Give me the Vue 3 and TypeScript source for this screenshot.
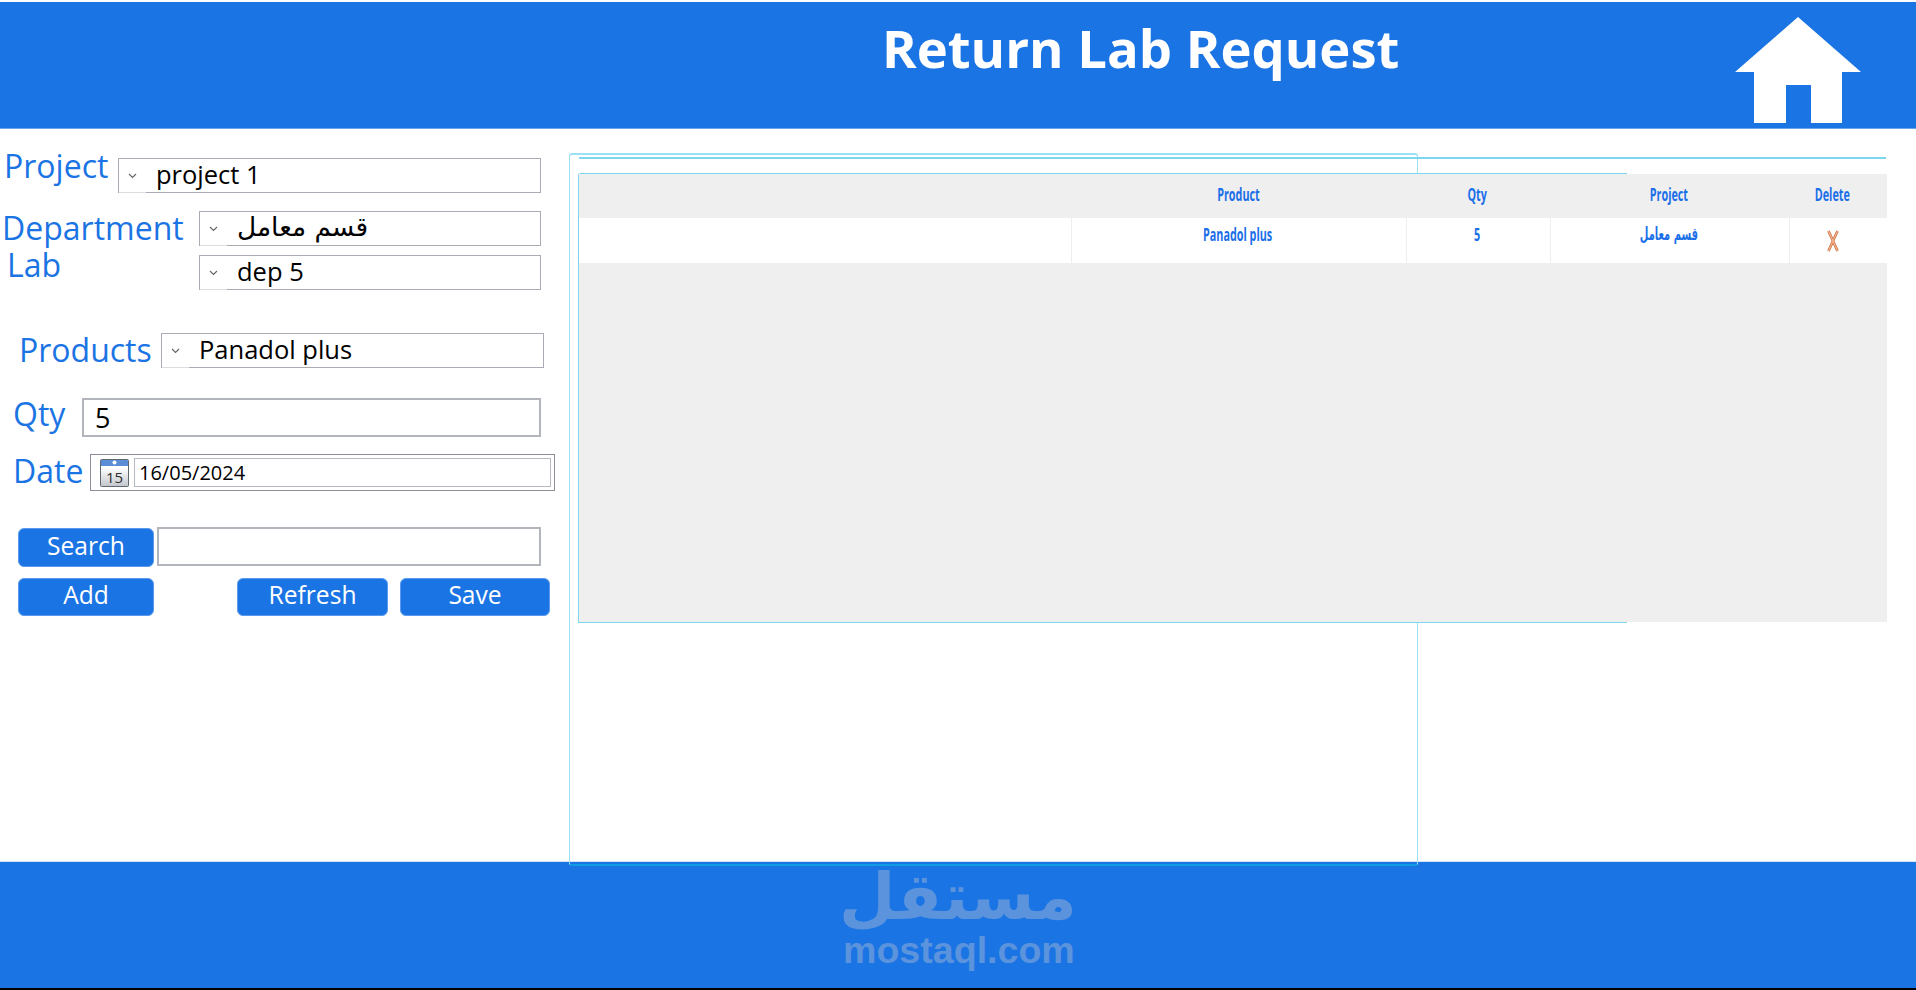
<script setup lang="ts">
// Return Lab Request screen
const columns = [
  { title: '', width: 493 },
  { title: 'Product', width: 335 },
  { title: 'Qty', width: 144 },
  { title: 'Project', width: 239 },
  { title: 'Delete', width: 97 }
]

const gridColumns = columns.map((c) => c.width + 'px').join(' ')
</script>

<template>
  <div class="page">
    <header class="header">
      <h1 class="title">Return Lab Request</h1>
      <svg class="home" width="126" height="106" viewBox="0 0 126 106">
        <path d="M63 0 L126 55 L107 55 L107 106 L76 106 L76 68 L51 68 L51 106 L19 106 L19 55 L0 55 Z" fill="#fff" />
      </svg>
    </header>

    <main class="main">
      <section class="form">
        <div class="row row-project">
          <label class="label label-project">Project</label>
          <div class="select select-project">
            <span class="chevron"><svg width="9" height="6" viewBox="0 0 9 6"><path d="M1 1 L4.5 4.5 L8 1" fill="none" stroke="#666" stroke-width="1.2" /></svg></span>
            <span class="select-text">project 1</span>
          </div>
        </div>

        <div class="row row-dept">
          <div class="label-stack">
            <label class="label">Department</label>
            <label class="label label-lab">Lab</label>
          </div>
          <div class="select-stack">
            <div class="select">
              <span class="chevron"><svg width="9" height="6" viewBox="0 0 9 6"><path d="M1 1 L4.5 4.5 L8 1" fill="none" stroke="#666" stroke-width="1.2" /></svg></span>
              <span class="select-text arabic">قسم معامل</span>
            </div>
            <div class="select">
              <span class="chevron"><svg width="9" height="6" viewBox="0 0 9 6"><path d="M1 1 L4.5 4.5 L8 1" fill="none" stroke="#666" stroke-width="1.2" /></svg></span>
              <span class="select-text">dep 5</span>
            </div>
          </div>
        </div>

        <div class="row row-products">
          <label class="label">Products</label>
          <div class="select select-products">
            <span class="chevron"><svg width="9" height="6" viewBox="0 0 9 6"><path d="M1 1 L4.5 4.5 L8 1" fill="none" stroke="#666" stroke-width="1.2" /></svg></span>
            <span class="select-text">Panadol plus</span>
          </div>
        </div>

        <div class="row row-qty">
          <label class="label label-qty">Qty</label>
          <input class="input input-qty" value="5" />
        </div>

        <div class="row row-date">
          <label class="label">Date</label>
          <div class="date-box">
            <svg class="calendar" width="29" height="28" viewBox="0 0 29 28">
              <defs>
                <linearGradient id="calBody" x1="0" y1="0" x2="0" y2="1">
                  <stop offset="0.3" stop-color="#ffffff" />
                  <stop offset="1" stop-color="#c2c6cc" />
                </linearGradient>
              </defs>
              <rect x="0.5" y="0.5" width="28" height="27" rx="1" fill="url(#calBody)" stroke="#5f6770" />
              <rect x="1" y="1" width="27" height="6" fill="#5c8ed6" />
              <circle cx="14.5" cy="3.5" r="2" fill="#fff" />
              <text x="14.5" y="24" text-anchor="middle" class="cal-day">15</text>
            </svg>
            <input class="date-input" value="16/05/2024" />
          </div>
        </div>

        <div class="row row-search">
          <button class="btn btn-left">Search</button>
          <input class="input input-search" />
        </div>

        <div class="row row-buttons">
          <button class="btn btn-left">Add</button>
          <button class="btn btn-refresh">Refresh</button>
          <button class="btn btn-save">Save</button>
        </div>
      </section>

      <section class="panel">
        <div class="panel-line"></div>
        <div class="inner">
          <div class="grid-view">
            <div class="grid-row head" :style="{ gridTemplateColumns: gridColumns }">
              <div v-for="col in columns" :key="col.title" class="cell">
                <span class="narrow">{{ col.title }}</span>
              </div>
            </div>
            <div class="grid-row body" :style="{ gridTemplateColumns: gridColumns }">
              <div class="cell"></div>
              <div class="cell"><span class="narrow">Panadol plus</span></div>
              <div class="cell"><span class="narrow">5</span></div>
              <div class="cell"><span class="narrow arabic-cell">قسم معامل</span></div>
              <div class="cell cell-delete">
                <svg width="12" height="22" viewBox="0 0 12 22">
                  <path d="M1.5 1 L10.5 21 M10.5 1 L1.5 21" fill="none" stroke="#c9683a" stroke-width="2.6" />
                  <path d="M1.5 1 L10.5 21 M10.5 1 L1.5 21" fill="none" stroke="#f5b592" stroke-width="1.2" />
                </svg>
              </div>
            </div>
          </div>
        </div>
      </section>
    </main>

    <footer class="footer">
      <div class="brand">
        <div class="brand-ar">مستقل</div>
        <div class="brand-en">mostaql.com</div>
      </div>
    </footer>
  </div>
</template>

<style>
html,
body {
  margin: 0;
  background: #fff;
  overflow: hidden;
}
</style>

<style scoped>
.page {
  width: 1916px;
  height: 990px;
  border-top: 2px solid #fff;
  box-sizing: border-box;
  display: flex;
  flex-direction: column;
  font-family: "Open Sans", "DejaVu Sans", sans-serif;
  background: #000;
}

.header {
  height: 127px;
  flex: none;
  box-sizing: border-box;
  background: #1b74e4;
  border-bottom: 1px solid #6aa4ec;
  display: flex;
  align-items: flex-start;
}

.title {
  margin: 11px 0 0 882px;
  color: #fff;
  font-size: 52.6px;
  line-height: 70px;
  font-weight: 700;
  white-space: nowrap;
}

.home {
  margin: 15px 55px 0 auto;
}

.main {
  height: 732px;
  flex: none;
  display: flex;
  align-items: flex-start;
  background: #fff;
}

.form {
  width: 569px;
  flex: none;
  padding-top: 29px;
  box-sizing: border-box;
}

.row {
  display: flex;
  align-items: flex-start;
}

.label {
  display: block;
  color: #1b74e4;
  font-size: 32px;
  line-height: 40px;
  white-space: nowrap;
}

.label-project {
  width: 118px;
  margin: -12px 0 0 4px;
  flex: none;
}

.row-project .select-project {
  width: 423px;
  flex: none;
  margin-left: -4px;
}

.select {
  height: 35px;
  box-sizing: border-box;
  border: 1px solid #a9acb4;
  background: #fff;
  display: flex;
  align-items: center;
  position: relative;
}

/* the dropdown button hides part of the bottom border */
.select::after {
  content: "";
  position: absolute;
  left: 0;
  bottom: -1px;
  width: 27px;
  height: 1px;
  background: #dcdde0;
}

.chevron {
  width: 27px;
  height: 100%;
  flex: none;
  display: flex;
  align-items: center;
  justify-content: center;
  margin-right: 10px;
}

.chevron svg {
  display: block;
}

.select-text {
  color: #000;
  font-size: 25.5px;
  line-height: 30px;
  padding-bottom: 3px;
}

.arabic {
  font-family: "DejaVu Sans", sans-serif;
  font-size: 26.4px;
}

.row-dept {
  margin-top: 18px;
}

.label-stack {
  width: 199px;
  flex: none;
  margin-top: -3px;
  padding-left: 2px;
  box-sizing: border-box;
}

.label-lab {
  margin: 0 0 0 5px;
  line-height: 34px;
}

.select-stack {
  width: 342px;
  flex: none;
  display: flex;
  flex-direction: column;
  gap: 9px;
}

.row-products {
  margin-top: 43px;
  padding-left: 19px;
}

.row-products .label {
  width: 142px;
  flex: none;
  margin-top: -3px;
}

.select-products {
  width: 383px;
  flex: none;
}

.row-qty {
  margin-top: 28px;
  padding-left: 13px;
}

.label-qty {
  width: 69px;
  flex: none;
  margin-top: -4px;
}

.input {
  box-sizing: border-box;
  border: 2px solid #b2b5bc;
  outline: none;
  background: #fff;
  padding: 0 11px;
  color: #000;
  font-family: inherit;
  font-size: 27px;
}

.input-qty {
  width: 459px;
  height: 39px;
}

.row-date {
  margin-top: 17px;
  padding-left: 13px;
}

.row-date .label {
  width: 77px;
  flex: none;
  margin-top: -3px;
}

.date-box {
  width: 465px;
  height: 37px;
  flex: none;
  box-sizing: border-box;
  border: 1px solid #8a8f98;
  padding: 3px;
  display: flex;
  align-items: center;
  gap: 5px;
  padding-left: 9px;
}

.calendar {
  flex: none;
}

.cal-day {
  font-family: "Open Sans", sans-serif;
  font-size: 15px;
  fill: #2e2e2e;
}

.date-input {
  flex: 1;
  min-width: 0;
  height: 29px;
  box-sizing: border-box;
  border: 1px solid #b6b9bf;
  outline: none;
  padding: 0 4px;
  color: #000;
  font-family: inherit;
  font-size: 20px;
}

.row-search {
  margin-top: 37px;
  padding-left: 18px;
  gap: 3px;
}

.input-search {
  width: 384px;
  height: 39px;
  margin-top: -1px;
}

.row-buttons {
  margin-top: 11px;
  padding-left: 18px;
}

.btn {
  height: 38px;
  box-sizing: border-box;
  border: 1px solid #5c9bec;
  border-radius: 6px;
  background: #1b74e4;
  color: #fff;
  font-family: inherit;
  font-size: 24.6px;
  line-height: 1;
  padding: 0 0 3px;
}

.btn-left {
  width: 136px;
  flex: none;
}

.row-search .btn {
  height: 39px;
}

.btn-refresh {
  width: 151px;
  flex: none;
  margin-left: 83px;
}

.btn-save {
  width: 150px;
  flex: none;
  margin-left: 12px;
}

.panel {
  width: 849px;
  height: 713px;
  flex: none;
  margin-top: 24px;
  box-sizing: border-box;
  border: 1px solid #9be0f4;
  border-top: 2px solid #9be0f4;
  border-bottom: 2px solid #0f9ce3;
  border-radius: 3px;
  position: relative;
  padding-left: 8px;
}

.panel-line {
  width: 1307px;
  height: 2px;
  margin: 2px 0 0 1px;
  background: #7dd6ee;
}

.inner {
  width: 1049px;
  height: 450px;
  margin-top: 14px;
  box-sizing: border-box;
  border: 1px solid #7dd6ee;
  border-right: none;
  border-radius: 3px 0 0 0;
}

.grid-view {
  width: 1308px;
  height: 448px;
  box-sizing: border-box;
  background: #efefef;
}

.grid-row {
  display: grid;
  height: 44px;
}

.head .cell {
  padding: 0 3px 5px 0;
  box-sizing: border-box;
}

.head .cell:last-child {
  padding-right: 12px;
}

.body {
  height: 45px;
  background: #fff;
}

.body .cell {
  border-right: 1px solid #eeeeee;
  box-sizing: border-box;
  padding: 5px 3px 0 0;
  align-items: flex-start;
}

.body .cell:last-child {
  border-right: none;
}

.cell {
  display: flex;
  align-items: center;
  justify-content: center;
  min-width: 0;
}

.narrow {
  display: inline-block;
  color: #1b6fe8;
  font-size: 18px;
  line-height: 22px;
  font-weight: 700;
  white-space: nowrap;
  transform: scaleX(0.6);
}

.arabic-cell {
  font-family: "DejaVu Sans", sans-serif;
  transform: scaleX(0.55);
}

.body .cell-delete {
  padding: 12px 12px 0 0;
}

.footer {
  height: 127px;
  flex: none;
  background: #1b74e4;
  border-top: 1px solid #d5e4f8;
  box-sizing: border-box;
  display: flex;
  justify-content: center;
}

.brand {
  width: 229px;
  margin-left: -1px;
  color: #5b93dc;
  text-align: center;
}

.brand-ar {
  font-family: "DejaVu Sans", sans-serif;
  font-size: 65px;
  font-weight: 700;
  line-height: 70px;
  margin-left: -4px;
}

.brand-en {
  font-family: "Liberation Sans", sans-serif;
  font-size: 37.6px;
  font-weight: 700;
  line-height: 36px;
}
</style>
